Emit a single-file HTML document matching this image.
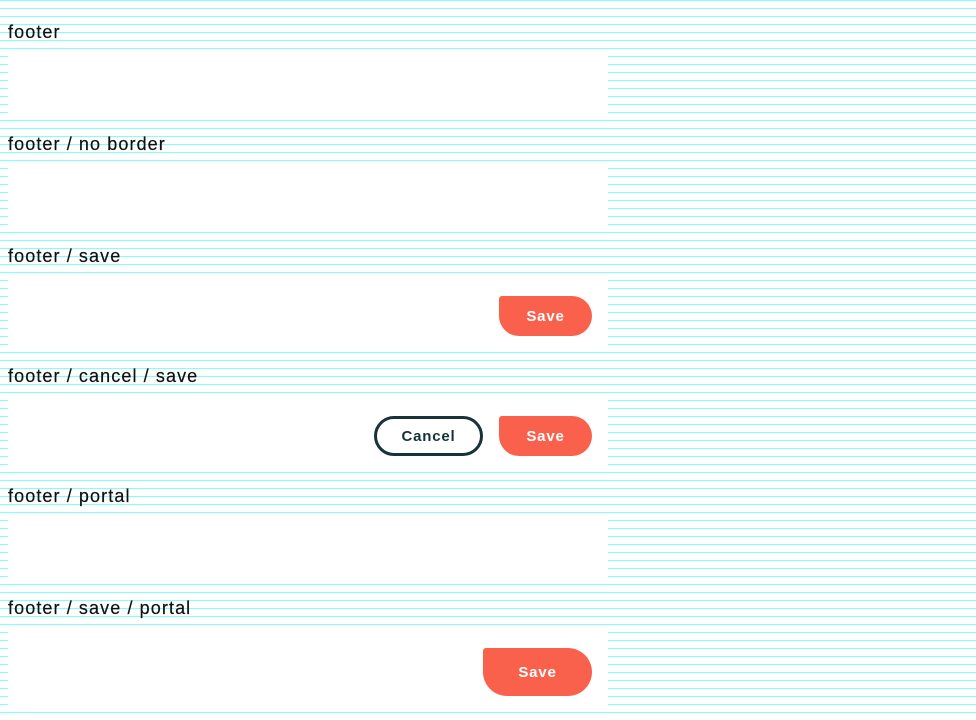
<!DOCTYPE html>
<html><head><style>
html,body{margin:0;padding:0}
body{width:976px;height:720px;position:relative;overflow:hidden;background:#fff;
background-image:repeating-linear-gradient(to bottom,#80ffff 0,#80ffff 1px,transparent 1px,transparent 8px);
font-family:"Liberation Sans",sans-serif}
.l{position:absolute;left:8px;font-size:18px;letter-spacing:1.1px;color:#111;line-height:20px;-webkit-text-stroke:0.2px #111}
.p{position:absolute;left:8px;width:600px;background:#fff}
.s{position:absolute;background:#fa614c;color:#fff;font-weight:bold;font-size:15px;letter-spacing:0.8px;display:flex;align-items:center;justify-content:center;border-radius:3px 20px 20px 20px}
.c{position:absolute;border:3px solid #16333a;border-radius:20px;color:#16333a;font-weight:bold;font-size:15px;letter-spacing:0.8px;display:flex;align-items:center;justify-content:center;box-sizing:border-box;background:#fff}
</style></head><body>
<div class="l" style="top:22px">footer</div>
<div class="p" style="top:49px;height:71px"></div>
<div class="l" style="top:134px">footer / no border</div>
<div class="p" style="top:161px;height:71px"></div>
<div class="l" style="top:246px">footer / save</div>
<div class="p" style="top:273px;height:78px"></div>
<div class="s" style="left:499px;top:296px;width:93px;height:40px">Save</div>
<div class="l" style="top:366px">footer / cancel / save</div>
<div class="p" style="top:393px;height:78px"></div>
<div class="c" style="left:374px;top:416px;width:109px;height:40px">Cancel</div>
<div class="s" style="left:499px;top:416px;width:93px;height:40px">Save</div>
<div class="l" style="top:486px">footer / portal</div>
<div class="p" style="top:513px;height:70px"></div>
<div class="l" style="top:598px">footer / save / portal</div>
<div class="p" style="top:625px;height:86px"></div>
<div class="s" style="left:483px;top:648px;width:109px;height:48px;border-radius:3px 24px 24px 24px">Save</div>
</body></html>
